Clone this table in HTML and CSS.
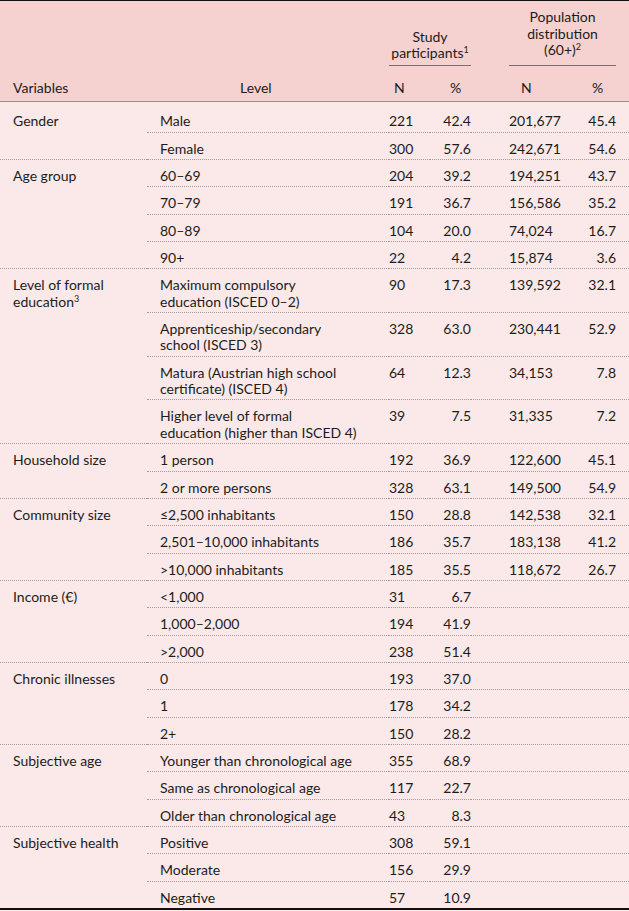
FILE: index.html
```html
<!DOCTYPE html>
<html>
<head>
<meta charset="utf-8">
<link rel="stylesheet" href="styles.css">
</head>
<body>
<table class="t">
<colgroup>
<col class="c1"><col class="c2"><col class="c3"><col class="c4"><col class="c5"><col class="c6">
</colgroup>
<thead>
<tr class="hr1">
<th class="var" rowspan="2">Variables</th>
<th class="lvl" rowspan="2">Level</th>
<th class="grp grp-study" colspan="2"><div class="grp-in">Study<br>participants<sup>1</sup></div></th>
<th class="grp grp-pop" colspan="2"><div class="grp-in">Population<br>distribution<br>(60+)<sup>2</sup></div></th>
</tr>
<tr class="hr2">
<th class="n1">N</th>
<th class="p1">%</th>
<th class="n2">N</th>
<th class="p2">%</th>
</tr>
</thead>
<tbody>
<tr class="first"><td class="var" rowspan="2">Gender</td><td class="lvl">Male</td><td class="n1">221</td><td class="p1">42.4</td><td class="n2">201,677</td><td class="p2">45.4</td></tr>
<tr><td class="lvl">Female</td><td class="n1">300</td><td class="p1">57.6</td><td class="n2">242,671</td><td class="p2">54.6</td></tr>

<tr><td class="var" rowspan="4">Age group</td><td class="lvl">60–69</td><td class="n1">204</td><td class="p1">39.2</td><td class="n2">194,251</td><td class="p2">43.7</td></tr>
<tr><td class="lvl">70–79</td><td class="n1">191</td><td class="p1">36.7</td><td class="n2">156,586</td><td class="p2">35.2</td></tr>
<tr><td class="lvl">80–89</td><td class="n1">104</td><td class="p1">20.0</td><td class="n2">74,024</td><td class="p2">16.7</td></tr>
<tr><td class="lvl">90+</td><td class="n1">22</td><td class="p1">4.2</td><td class="n2">15,874</td><td class="p2">3.6</td></tr>

<tr><td class="var" rowspan="4">Level of formal<br>education<sup>3</sup></td><td class="lvl">Maximum compulsory<br>education (ISCED 0–2)</td><td class="n1">90</td><td class="p1">17.3</td><td class="n2">139,592</td><td class="p2">32.1</td></tr>
<tr><td class="lvl">Apprenticeship/secondary<br>school (ISCED 3)</td><td class="n1">328</td><td class="p1">63.0</td><td class="n2">230,441</td><td class="p2">52.9</td></tr>
<tr><td class="lvl">Matura (Austrian high school<br>certificate) (ISCED 4)</td><td class="n1">64</td><td class="p1">12.3</td><td class="n2">34,153</td><td class="p2">7.8</td></tr>
<tr><td class="lvl">Higher level of formal<br>education (higher than ISCED 4)</td><td class="n1">39</td><td class="p1">7.5</td><td class="n2">31,335</td><td class="p2">7.2</td></tr>

<tr><td class="var" rowspan="2">Household size</td><td class="lvl">1 person</td><td class="n1">192</td><td class="p1">36.9</td><td class="n2">122,600</td><td class="p2">45.1</td></tr>
<tr><td class="lvl">2 or more persons</td><td class="n1">328</td><td class="p1">63.1</td><td class="n2">149,500</td><td class="p2">54.9</td></tr>

<tr><td class="var" rowspan="3">Community size</td><td class="lvl">≤2,500 inhabitants</td><td class="n1">150</td><td class="p1">28.8</td><td class="n2">142,538</td><td class="p2">32.1</td></tr>
<tr><td class="lvl">2,501–10,000 inhabitants</td><td class="n1">186</td><td class="p1">35.7</td><td class="n2">183,138</td><td class="p2">41.2</td></tr>
<tr><td class="lvl">&gt;10,000 inhabitants</td><td class="n1">185</td><td class="p1">35.5</td><td class="n2">118,672</td><td class="p2">26.7</td></tr>

<tr><td class="var" rowspan="3">Income (€)</td><td class="lvl">&lt;1,000</td><td class="n1">31</td><td class="p1">6.7</td><td class="n2"></td><td class="p2"></td></tr>
<tr><td class="lvl">1,000–2,000</td><td class="n1">194</td><td class="p1">41.9</td><td class="n2"></td><td class="p2"></td></tr>
<tr><td class="lvl">&gt;2,000</td><td class="n1">238</td><td class="p1">51.4</td><td class="n2"></td><td class="p2"></td></tr>

<tr><td class="var" rowspan="3">Chronic illnesses</td><td class="lvl">0</td><td class="n1">193</td><td class="p1">37.0</td><td class="n2"></td><td class="p2"></td></tr>
<tr><td class="lvl">1</td><td class="n1">178</td><td class="p1">34.2</td><td class="n2"></td><td class="p2"></td></tr>
<tr><td class="lvl">2+</td><td class="n1">150</td><td class="p1">28.2</td><td class="n2"></td><td class="p2"></td></tr>

<tr><td class="var" rowspan="3">Subjective age</td><td class="lvl">Younger than chronological age</td><td class="n1">355</td><td class="p1">68.9</td><td class="n2"></td><td class="p2"></td></tr>
<tr><td class="lvl">Same as chronological age</td><td class="n1">117</td><td class="p1">22.7</td><td class="n2"></td><td class="p2"></td></tr>
<tr><td class="lvl">Older than chronological age</td><td class="n1">43</td><td class="p1">8.3</td><td class="n2"></td><td class="p2"></td></tr>

<tr><td class="var" rowspan="3">Subjective health</td><td class="lvl">Positive</td><td class="n1">308</td><td class="p1">59.1</td><td class="n2"></td><td class="p2"></td></tr>
<tr><td class="lvl">Moderate</td><td class="n1">156</td><td class="p1">29.9</td><td class="n2"></td><td class="p2"></td></tr>
<tr class="last"><td class="lvl">Negative</td><td class="n1">57</td><td class="p1">10.9</td><td class="n2"></td><td class="p2"></td></tr>
</tbody>
</table>
</body>
</html>
```

FILE: styles.css
```css
html, body {
  margin: 0;
  padding: 0;
  background: #fae9e8;
}

.t {
  width: 629px;
  table-layout: fixed;
  border-collapse: collapse;
  font-family: "Lato", "Roboto", sans-serif;
  font-size: 14px;
  line-height: 16.35px;
  color: #1c1c1c;
  border-top: 1px solid #111;
  border-bottom: 2px solid #111;
}

.c1 { width: 147px; }
.c2 { width: 242px; }
.c3 { width: 41px; }
.c4 { width: 41px; }
.c5 { width: 89px; }
.c6 { width: 69px; }

thead {
  background: #f5d1d0;
}

thead th {
  font-weight: normal;
  padding: 0;
  white-space: nowrap;
}

.hr1 .grp {
  vertical-align: bottom;
  text-align: center;
  padding: 8px 0 0;
  line-height: 16.5px;
}

.grp-in {
  border-bottom: 1px solid #7b6f6f;
  padding-bottom: 6px;
}

.grp-study .grp-in {
  padding-bottom: 3px;
}

.grp-pop {
  padding-left: 38px !important;
  padding-right: 13px !important;
}

sup {
  font-size: 9px;
  line-height: 0;
  vertical-align: 5px;
}

thead .var,
thead .lvl,
.hr2 th {
  vertical-align: bottom;
  padding-top: 14px;
  padding-bottom: 5px;
  border-bottom: 1px solid #9a8d8d;
}

thead .var { text-align: left; padding-left: 13px; }
thead .lvl { text-align: left; padding-left: 93px; }
.hr2 .n1 { text-align: left; padding-left: 5px; }
.hr2 .p1 { text-align: left; padding-left: 20px; }
.hr2 .n2 { text-align: left; padding-left: 50px; }
.hr2 .p2 { text-align: left; padding-left: 32px; }

tbody td {
  padding: 8px 0 2px;
  vertical-align: top;
  white-space: nowrap;
  border-bottom: 1px dotted #a59898;
}

tbody tr.first td {
  padding-top: 11.5px;
}

tbody tr.last td {
  border-bottom: none;
}

tbody .var { padding-left: 13px; }
tbody .lvl { padding-left: 13px; }
tbody .n1 { text-align: left; }
tbody .p1 { text-align: right; }
tbody .n2 { text-align: left; padding-left: 38px; }
tbody .p2 { text-align: right; padding-right: 13px; }
```
